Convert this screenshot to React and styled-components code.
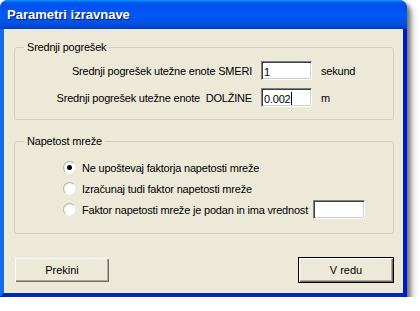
import React from 'react';
import styled, { createGlobalStyle } from 'styled-components';

const GlobalStyle = createGlobalStyle`
  html, body {
    margin: 0;
    padding: 0;
    background: #ffffff;
  }
  body {
    font-family: 'Liberation Sans', Arial, sans-serif;
    font-size: 11px;
    letter-spacing: -0.2px;
    color: #000;
    -webkit-font-smoothing: none;
  }
`;

function App() {
  return (
    <>
      <GlobalStyle />
      <Window>
        <TitleBar>
          <Title>Parametri izravnave</Title>
        </TitleBar>
        <Frame>
          <Group>
            <Legend>Srednji pogrešek</Legend>
            <FieldGrid>
              <FieldLabel>Srednji pogrešek utežne enote SMERI</FieldLabel>
              <Edit>1</Edit>
              <Unit>sekund</Unit>
              <FieldLabel>Srednji pogrešek utežne enote  DOLŽINE</FieldLabel>
              <Edit>
                0.002<Caret />
              </Edit>
              <Unit>m</Unit>
            </FieldGrid>
          </Group>

          <Group $gap>
            <Legend>Napetost mreže</Legend>
            <RadioList>
              <RadioRow>
                <Radio $checked />
                <span>Ne upoštevaj faktorja napetosti mreže</span>
              </RadioRow>
              <RadioRow>
                <Radio />
                <span>Izračunaj tudi faktor napetosti mreže</span>
              </RadioRow>
              <RadioRow>
                <Radio />
                <span>Faktor napetosti mreže je podan in ima vrednost</span>
                <Edit $width={52} />
              </RadioRow>
            </RadioList>
          </Group>

          <ButtonBar>
            <Button>Prekini</Button>
            <Button $default>V redu</Button>
          </ButtonBar>
        </Frame>
      </Window>
    </>
  );
}

export default App;

const Window = styled.div`
  width: 407px;
  height: 297px;
  display: flex;
  flex-direction: column;
  border-radius: 8px 8px 0 0;
  box-shadow: 3px 3px 4px rgba(0, 0, 0, 0.45), 6px 6px 6px rgba(0, 0, 0, 0.2);
  background: #0054e3;
`;

const TitleBar = styled.div`
  height: 29px;
  flex: none;
  display: flex;
  align-items: center;
  padding: 0 7px 1px;
  box-sizing: border-box;
  border-radius: 8px 8px 0 0;
  background: linear-gradient(
    to bottom,
    #0997ff 0px,
    #0053ee 3px,
    #0050ee 6px,
    #0058f5 14px,
    #0054e6 22px,
    #0049d4 26px,
    #003dc0 29px
  );
`;

const Title = styled.span`
  font-family: 'Liberation Sans', Arial, sans-serif;
  font-weight: bold;
  font-size: 13px;
  letter-spacing: 0;
  color: #fff;
  text-shadow: 1px 1px 0 #0a1883;
`;

const Frame = styled.div`
  flex: 1;
  display: flex;
  flex-direction: column;
  background: #ece9d8;
  border-style: solid;
  border-width: 0 4px 4px 4px;
  border-color: #0047d5 #0019cf #0029b8 #166aee;
  padding: 12px 9px 10px 10px;
`;

const Group = styled.fieldset`
  margin: ${(p) => (p.$gap ? '15px 0 0' : '0')};
  padding: 7px 0 12px;
  border: 1px solid #d0d0bf;
  border-radius: 3px;
  min-width: 0;
`;

const Legend = styled.legend`
  margin-left: 9px;
  padding: 0 3px;
  line-height: 13px;
  color: #000;
`;

const FieldGrid = styled.div`
  display: grid;
  grid-template-columns: 237px 51px auto;
  column-gap: 9px;
  row-gap: 8px;
  align-items: center;
`;

const FieldLabel = styled.span`
  text-align: right;
  white-space: pre;
`;

const Unit = styled.span``;

const Edit = styled.div`
  box-sizing: border-box;
  width: ${(p) => p.$width || 51}px;
  height: 19px;
  padding: 2px 2px 0;
  background: #fff;
  border-style: solid;
  border-width: 1px;
  border-color: #808080 #fff #fff #808080;
  box-shadow: inset 1px 1px 0 #404040, inset -1px -1px 0 #d4d0c8;
  line-height: 14px;
  display: flex;
  align-items: center;
`;

const Caret = styled.span`
  display: inline-block;
  width: 1px;
  height: 13px;
  background: #000;
`;

const RadioList = styled.div`
  display: flex;
  flex-direction: column;
  gap: 2px;
  padding: 3px 0 2px 48px;
`;

const RadioRow = styled.div`
  display: flex;
  align-items: center;
  height: 19px;
  gap: 6px;

  & > ${Edit} {
    margin-left: -1px;
  }
`;

const Radio = styled.span`
  position: relative;
  flex: none;
  width: 13px;
  height: 13px;
  box-sizing: border-box;
  border-radius: 50%;
  background: radial-gradient(circle at 60% 60%, #ffffff 50%, #eceae2 80%, #d6d3c6 100%);
  border: 1px solid #b9b6a8;
  border-right-color: #f4f3ee;
  border-bottom-color: #f4f3ee;

  &::after {
    content: '';
    display: ${(p) => (p.$checked ? 'block' : 'none')};
    position: absolute;
    left: 3px;
    top: 3px;
    width: 5px;
    height: 5px;
    border-radius: 50%;
    background: #000;
  }
`;

const ButtonBar = styled.div`
  margin-top: auto;
  display: flex;
  justify-content: space-between;
`;

const Button = styled.button`
  width: 96px;
  height: 26px;
  box-sizing: border-box;
  font: inherit;
  color: #000;
  background: #ece9d8;
  border: 1px solid ${(p) => (p.$default ? '#000' : '#ece9d8')};
  box-shadow: inset 1px 1px 0 #fff, inset -1px -1px 0 #716f64, inset -2px -2px 0 #aca899;
  padding: 0;
`;
